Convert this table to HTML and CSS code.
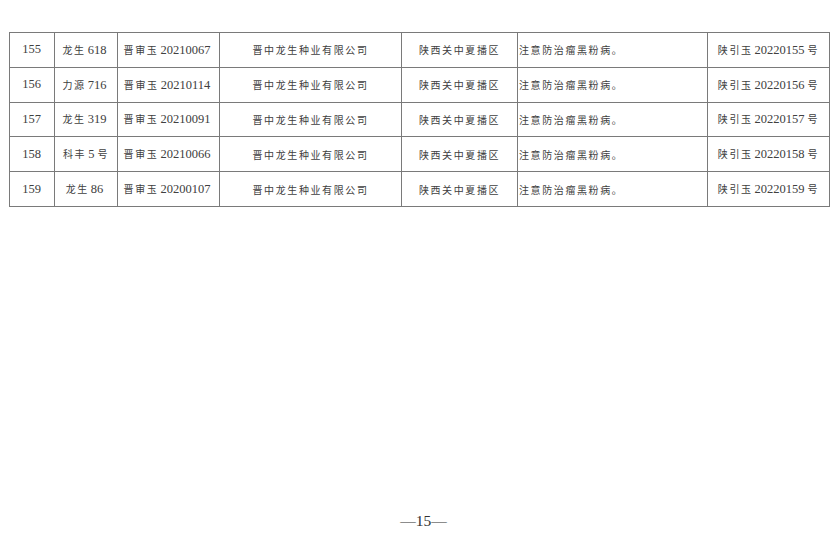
FILE: index.html
```html
<!DOCTYPE html>
<html lang="zh">
<head>
<meta charset="utf-8">
<link rel="stylesheet" href="styles.css">
</head>
<body>
<div class="page">
<table class="grid">
<colgroup>
<col class="c1"><col class="c2"><col class="c3"><col class="c4"><col class="c5"><col class="c6"><col class="c7">
</colgroup>
<tbody>
<tr><td><span class="n">155</span></td><td>龙生<span class="n">618</span></td><td>晋审玉<span class="n">20210067</span></td><td>晋中龙生种业有限公司</td><td>陕西关中夏播区</td><td class="left">注意防治瘤黑粉病。</td><td>陕引玉<span class="n">20220155</span>号</td></tr>
<tr><td><span class="n">156</span></td><td>力源<span class="n">716</span></td><td>晋审玉<span class="n">20210114</span></td><td>晋中龙生种业有限公司</td><td>陕西关中夏播区</td><td class="left">注意防治瘤黑粉病。</td><td>陕引玉<span class="n">20220156</span>号</td></tr>
<tr><td><span class="n">157</span></td><td>龙生<span class="n">319</span></td><td>晋审玉<span class="n">20210091</span></td><td>晋中龙生种业有限公司</td><td>陕西关中夏播区</td><td class="left">注意防治瘤黑粉病。</td><td>陕引玉<span class="n">20220157</span>号</td></tr>
<tr><td><span class="n">158</span></td><td>科丰<span class="n">5</span>号</td><td>晋审玉<span class="n">20210066</span></td><td>晋中龙生种业有限公司</td><td>陕西关中夏播区</td><td class="left">注意防治瘤黑粉病。</td><td>陕引玉<span class="n">20220158</span>号</td></tr>
<tr><td><span class="n">159</span></td><td>龙生<span class="n">86</span></td><td>晋审玉<span class="n">20200107</span></td><td>晋中龙生种业有限公司</td><td>陕西关中夏播区</td><td class="left">注意防治瘤黑粉病。</td><td>陕引玉<span class="n">20220159</span>号</td></tr>
</tbody>
</table>
<div class="footer">—15—</div>
</div>
</body>
</html>
```
FILE: styles.css
```css
html, body {
  margin: 0;
  padding: 0;
  background: #ffffff;
}
.page {
  width: 836px;
  height: 541px;
  padding: 32px 0 0 9px;
  box-sizing: border-box;
  font-family: "Liberation Serif", "Noto Sans CJK SC", serif;
  color: #404040;
}
.grid {
  border-collapse: collapse;
  table-layout: fixed;
  width: 820px;
}
.c1 { width: 45px; }
.c2 { width: 63px; }
.c3 { width: 102px; }
.c4 { width: 182px; }
.c5 { width: 116px; }
.c6 { width: 190px; }
.c7 { width: 122px; }
.grid td {
  border: 1px solid #7a7a7a;
  height: 33.8px;
  padding: 0;
  text-align: center;
  vertical-align: middle;
  font-size: 10px;
  letter-spacing: 1.6px;
  white-space: nowrap;
  overflow: hidden;
}
.grid td.left {
  text-align: left;
  padding-left: 1px;
}
.n {
  font-size: 12.5px;
  letter-spacing: 0;
  margin: 0 3px 0 2px;
}
.footer {
  margin-top: 305px;
  text-align: center;
  font-size: 15.5px;
  color: #333333;
  padding-left: 2px;
}
```
